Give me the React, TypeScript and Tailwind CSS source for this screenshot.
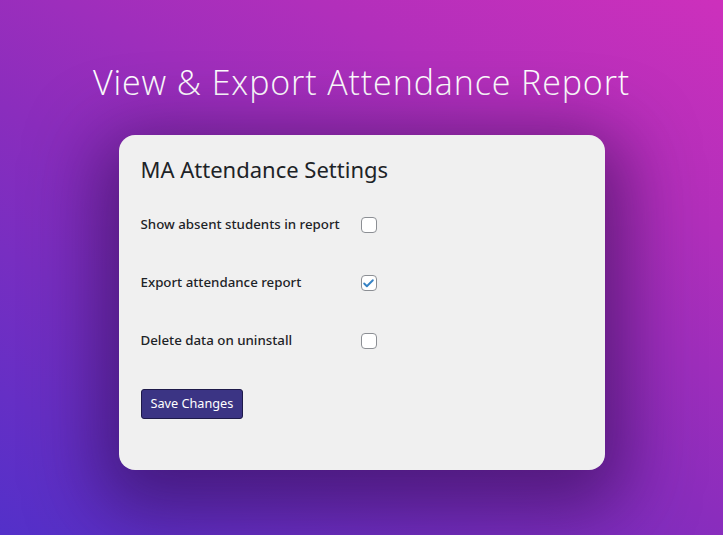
import { Check } from 'lucide-react'

const rows = [
  { label: 'Show absent students in report', checked: false },
  { label: 'Export attendance report', checked: true },
  { label: 'Delete data on uninstall', checked: false },
]

function Box({ checked }: { checked: boolean }) {
  return (
    <span className="flex h-4 w-4 items-center justify-center rounded-[4px] border border-[#8c8f94] bg-white">
      {checked && <Check size={13} strokeWidth={3.5} className="text-[#3582c4]" />}
    </span>
  )
}

export default function App() {
  return (
    <div className="flex h-[535px] w-full flex-col items-center overflow-hidden bg-[linear-gradient(30deg,#5330c9_0%,#8a2dbd_45%,#b12fbb_75%,#cd30bc_100%)] font-['Open_Sans',sans-serif]">
      <h1 className="mt-[57px] text-[34px] leading-[51px] font-light tracking-[0.9px] text-white">
        View &amp; Export Attendance Report
      </h1>
      <div className="mt-[27px] h-[335px] w-[486px] rounded-2xl bg-[#f0f0f0] px-[22px] pt-[20px] text-[#1d2327] shadow-[0_20px_70px_20px_rgba(40,10,70,0.55)]">
        <h2 className="text-[22px] leading-7 font-['Noto_Sans',sans-serif]">MA Attendance Settings</h2>
        <div className="mt-[33px] flex flex-col gap-[40px] font-['Noto_Sans',sans-serif]">
          {rows.map((r) => (
            <div key={r.label} className="flex h-[18px] items-center">
              <span className="w-[220px] text-[13.3px] font-medium">{r.label}</span>
              <Box checked={r.checked} />
            </div>
          ))}
        </div>
        <button className="mt-[39px] h-[30px] rounded-[3px] border border-[#1e1a4a] bg-[#3b3484] px-[9px] text-[12.7px] text-white font-['Noto_Sans',sans-serif]">
          Save Changes
        </button>
      </div>
    </div>
  )
}
